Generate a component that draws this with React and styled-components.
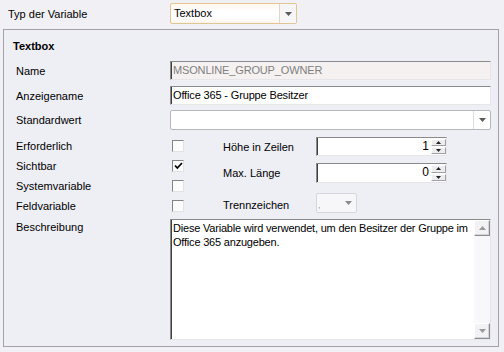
import React from 'react'
import styled, { createGlobalStyle } from 'styled-components'

const GlobalStyle = createGlobalStyle`
  html, body {
    margin: 0;
    padding: 0;
    background: #f0f0f5;
  }
  body {
    font-family: "Liberation Sans", Arial, sans-serif;
    font-size: 11px;
    color: #000;
  }
`

function DownArrow({ color = '#5a5a5a' }) {
  return (
    <svg width="7" height="4" viewBox="0 0 7 4">
      <polygon points="0,0 7,0 3.5,4" fill={color} />
    </svg>
  )
}

function UpArrow({ color = '#5a5a5a' }) {
  return (
    <svg width="7" height="4" viewBox="0 0 7 4">
      <polygon points="0,4 7,4 3.5,0" fill={color} />
    </svg>
  )
}

function Combo({ value, width, focused, disabled }) {
  return (
    <ComboBox $width={width} $focused={focused} $disabled={disabled}>
      <ComboText $disabled={disabled}>{value}</ComboText>
      <ComboButton $focused={focused} $disabled={disabled}>
        <DownArrow color={disabled ? '#8a8a8a' : '#5a5a5a'} />
      </ComboButton>
    </ComboBox>
  )
}

function Spin({ value }) {
  return (
    <Spinner>
      <SpinValue>{value}</SpinValue>
      <SpinButtons>
        <SpinButton><UpArrow color="#222" /></SpinButton>
        <SpinButton><DownArrow color="#222" /></SpinButton>
      </SpinButtons>
    </Spinner>
  )
}

function Check({ checked }) {
  return (
    <CheckBox>
      {checked && (
        <svg width="9" height="8" viewBox="0 0 9 8">
          <path d="M1 3.5 L3.3 6 L8 1" stroke="#000" strokeWidth="1.7" fill="none" />
        </svg>
      )}
    </CheckBox>
  )
}

export default function App() {
  return (
    <Page>
      <GlobalStyle />
      <TopRow>
        <TopLabel>Typ der Variable</TopLabel>
        <Combo value="Textbox" width={127} focused />
      </TopRow>

      <Panel>
        <PanelTitle>Textbox</PanelTitle>

        <FieldRow $height={19} $gap={6}>
          <Label>Name</Label>
          <TextInput $disabled>MSONLINE_GROUP_OWNER</TextInput>
        </FieldRow>
        <FieldRow $height={19} $gap={5}>
          <Label>Anzeigename</Label>
          <TextInput>Office 365 - Gruppe Besitzer</TextInput>
        </FieldRow>
        <FieldRow $height={20} $gap={0}>
          <Label>Standardwert</Label>
          <Combo value="" />
        </FieldRow>

        <Middle>
          <CheckGrid>
            <Label>Erforderlich</Label>
            <Check />
            <Label>Sichtbar</Label>
            <Check checked />
            <Label>Systemvariable</Label>
            <Check />
            <Label>Feldvariable</Label>
            <Check />
          </CheckGrid>
          <Options>
            <OptionRow $height={19} $gap={0}>
              <Label>Höhe in Zeilen</Label>
              <Spin value="1" />
            </OptionRow>
            <OptionRow $height={20} $gap={7}>
              <Label>Max. Länge</Label>
              <Spin value="0" />
            </OptionRow>
            <OptionRow $height={20} $gap={10}>
              <OptionLabel>Trennzeichen</OptionLabel>
              <Combo value="," width={41} disabled />
            </OptionRow>
          </Options>
        </Middle>

        <FieldRow $height={121} $gap={0} $top>
          <MemoLabel>Beschreibung</MemoLabel>
          <Memo>
            <MemoText>
              Diese Variable wird verwendet, um den Besitzer der Gruppe im Office 365 anzugeben.
            </MemoText>
            <ScrollBar>
              <ScrollButton><UpArrow color="#9a9a9a" /></ScrollButton>
              <ScrollTrack />
              <ScrollButton><DownArrow color="#9a9a9a" /></ScrollButton>
            </ScrollBar>
          </Memo>
        </FieldRow>
      </Panel>
    </Page>
  )
}

const Page = styled.div`
  width: 504px;
  height: 352px;
  overflow: hidden;
  background: #f0f0f5;
`
const TopRow = styled.div`
  display: flex;
  align-items: flex-start;
  height: 29px;
  box-sizing: border-box;
  padding: 3px 0 0 8px;
`
const TopLabel = styled.div`
  width: 162px;
  line-height: 22px;
`
const ComboBox = styled.div`
  display: flex;
  box-sizing: border-box;
  width: ${p => (p.$width ? `${p.$width}px` : '100%')};
  height: ${p => (p.$focused ? '21px' : '20px')};
  border: 1px solid ${p => (p.$focused ? '#e3c595' : p.$disabled ? '#d6d6de' : '#b6b6be')};
  border-radius: 2px;
  background: ${p =>
    p.$focused
      ? 'linear-gradient(#fff8ee, #ffffff 40%, #ffffff 70%, #fff6ea)'
      : p.$disabled
      ? '#f7f7f9'
      : '#ffffff'};
`
const ComboText = styled.div`
  flex: 1;
  padding: ${p => (p.$disabled ? '5px 0 0 1px' : '0 3px')};
  line-height: ${p => (p.$disabled ? '12px' : '19px')};
  font-size: ${p => (p.$disabled ? '9px' : '11px')};
  color: ${p => (p.$disabled ? '#9a9a9a' : '#000')};
  white-space: nowrap;
  overflow: hidden;
`
const ComboButton = styled.div`
  width: 16px;
  display: flex;
  align-items: center;
  justify-content: center;
  border-left: 1px solid ${p => (p.$focused ? '#e2d6c6' : p.$disabled ? 'transparent' : '#dcdce2')};
  background: ${p => (p.$focused ? '#f6f6f8' : 'transparent')};
`
const Panel = styled.div`
  box-sizing: border-box;
  margin-left: 3px;
  width: 496px;
  height: 318px;
  border: 1px solid #a2a2a8;
  background: #eeeef5;
  padding: 0 7px 0 12px;
`
const PanelTitle = styled.div`
  margin-left: -3px;
  padding: 9px 0 8px;
  line-height: 14px;
  font-weight: bold;
`
const FieldRow = styled.div`
  display: grid;
  grid-template-columns: 154px 1fr;
  align-items: ${p => (p.$top ? 'start' : 'center')};
  height: ${p => p.$height}px;
  margin-bottom: ${p => p.$gap}px;
`
const Label = styled.div`
  line-height: 14px;
  white-space: nowrap;
`
const OptionLabel = styled(Label)`
  margin-top: 3px;
`
const MemoLabel = styled(Label)`
  margin-top: 1px;
`
const TextInput = styled.div`
  box-sizing: border-box;
  height: 100%;
  padding: 0 2px;
  line-height: 17px;
  letter-spacing: -0.15px;
  white-space: nowrap;
  overflow: hidden;
  border: 1px solid;
  border-color: #8a8a8a #e6e6ea #e6e6ea #8a8a8a;
  box-shadow: inset 1px 0 0 #404040;
  background: ${p => (p.$disabled ? '#f5f1f1' : '#ffffff')};
  color: ${p => (p.$disabled ? '#808080' : '#000')};
`
const Middle = styled.div`
  display: flex;
  box-sizing: border-box;
  height: 89px;
  padding-top: 6px;
`
const CheckGrid = styled.div`
  display: grid;
  grid-template-columns: 154px 53px;
  grid-auto-rows: 20px;
  align-items: center;
`
const CheckBox = styled.div`
  box-sizing: border-box;
  width: 12px;
  height: 12px;
  margin-left: 2px;
  display: flex;
  align-items: center;
  justify-content: center;
  border: 1px solid;
  border-color: #858585 #e2e2e6 #e2e2e6 #858585;
  background: #fcfcfc;
`
const Options = styled.div`
  margin-top: 1px;
  display: flex;
  flex-direction: column;
`
const OptionRow = styled.div`
  display: grid;
  grid-template-columns: 93px 131px;
  align-items: center;
  height: ${p => p.$height}px;
  margin-top: ${p => p.$gap}px;
`
const Spinner = styled.div`
  box-sizing: border-box;
  height: 100%;
  display: flex;
  border: 1px solid;
  border-color: #8a8a8a #e6e6ea #e6e6ea #8a8a8a;
  box-shadow: inset 1px 0 0 #404040;
  background: #ffffff;
`
const SpinValue = styled.div`
  flex: 1;
  text-align: right;
  padding-right: 2px;
  line-height: 17px;
  font-size: 12px;
`
const SpinButtons = styled.div`
  width: 15px;
  display: flex;
  flex-direction: column;
  gap: 1px;
  padding: 1px 0;
  box-sizing: border-box;
`
const SpinButton = styled.div`
  flex: 1;
  display: flex;
  align-items: center;
  justify-content: center;
  box-sizing: border-box;
  border: 1px solid;
  border-color: #ffffff #a0a0a6 #a0a0a6 #ffffff;
  background: #ededf0;
  svg {
    width: 5px;
    height: 3px;
  }
`
const Memo = styled.div`
  box-sizing: border-box;
  height: 121px;
  display: flex;
  border: 1px solid;
  border-color: #8a8a8a #e6e6ea #e6e6ea #8a8a8a;
  box-shadow: inset 1px 0 0 #404040;
  background: #ffffff;
`
const MemoText = styled.div`
  flex: 1;
  padding: 1px 2px;
  line-height: 14px;
  letter-spacing: -0.2px;
`
const ScrollBar = styled.div`
  width: 16px;
  display: flex;
  flex-direction: column;
  background: #f6f6f8;
`
const ScrollButton = styled.div`
  box-sizing: border-box;
  height: 16px;
  display: flex;
  align-items: center;
  justify-content: center;
  border: 1px solid;
  border-color: #ffffff #8c8c92 #8c8c92 #ffffff;
  box-shadow: inset -1px -1px 0 #d4d4da;
  background: #f2f2f4;
`
const ScrollTrack = styled.div`
  flex: 1;
  background-color: #f8f8fa;
  background-image: radial-gradient(#e6e6ea 0.6px, transparent 0.7px);
  background-size: 2px 2px;
`
